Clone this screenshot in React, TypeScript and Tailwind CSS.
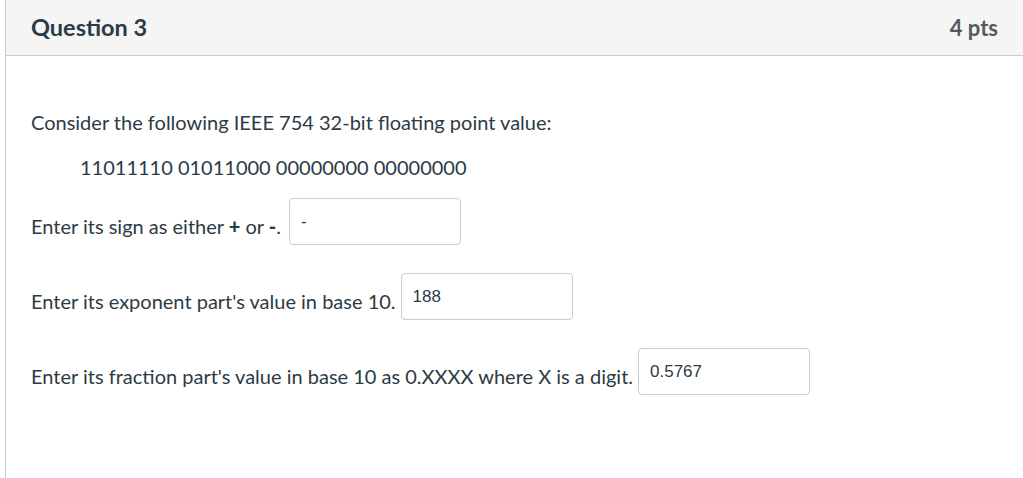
import React from "react";

const FONT = { fontFamily: "Lato, 'Noto Sans', sans-serif" };

function Answer({ value, className = "" }: { value: string; className?: string }) {
  return (
    <input
      type="text"
      defaultValue={value}
      className={`h-[47px] w-[172px] rounded-[4px] border border-[#c7cdd1] bg-white px-[11px] text-[17px] text-[#2d3b45] outline-none ${className}`}
      style={{ fontFamily: "'Liberation Sans', Arial, sans-serif" }}
    />
  );
}

export default function App() {
  return (
    <div className="h-[478px] w-[1023px] overflow-hidden bg-white" style={FONT}>
      <div className="ml-[5px] h-full border-l border-[#c7cdd1]">
        <div className="flex h-[56px] items-center justify-between border-b border-[#c7cdd1] bg-[#f5f5f5] pl-[25px] pr-[25px]">
          <div className="text-[23.5px] font-bold text-[#2d3b45]">Question 3</div>
          <div className="text-[22px] font-bold text-[#525b61]">4 pts</div>
        </div>

        <div className="pl-[25px] pt-[54px] text-[20px] text-[#2d3b45]">
          <p className="leading-[24px]">Consider the following IEEE 754 32-bit floating point value:</p>
          <p className="mt-[21px] pl-[49px] leading-[24px]">11011110 01011000 00000000 00000000</p>

          <div className="mt-[19px] flex flex-col gap-[28px]">
            <div className="flex items-center gap-[8px]">
              <span className="mt-[8px]">
                Enter its sign as either <b className="font-black">+</b> or <b className="font-black">-</b>.
              </span>
              <Answer value="-" />
            </div>
            <div className="flex items-center gap-[5px]">
              <span className="mt-[8px]">Enter its exponent part's value in base 10.</span>
              <Answer value="188" />
            </div>
            <div className="flex items-center gap-[5px]">
              <span className="mt-[8px]">Enter its fraction part's value in base 10 as 0.XXXX where X is a digit.</span>
              <Answer value="0.5767" />
            </div>
          </div>
        </div>
      </div>
    </div>
  );
}
